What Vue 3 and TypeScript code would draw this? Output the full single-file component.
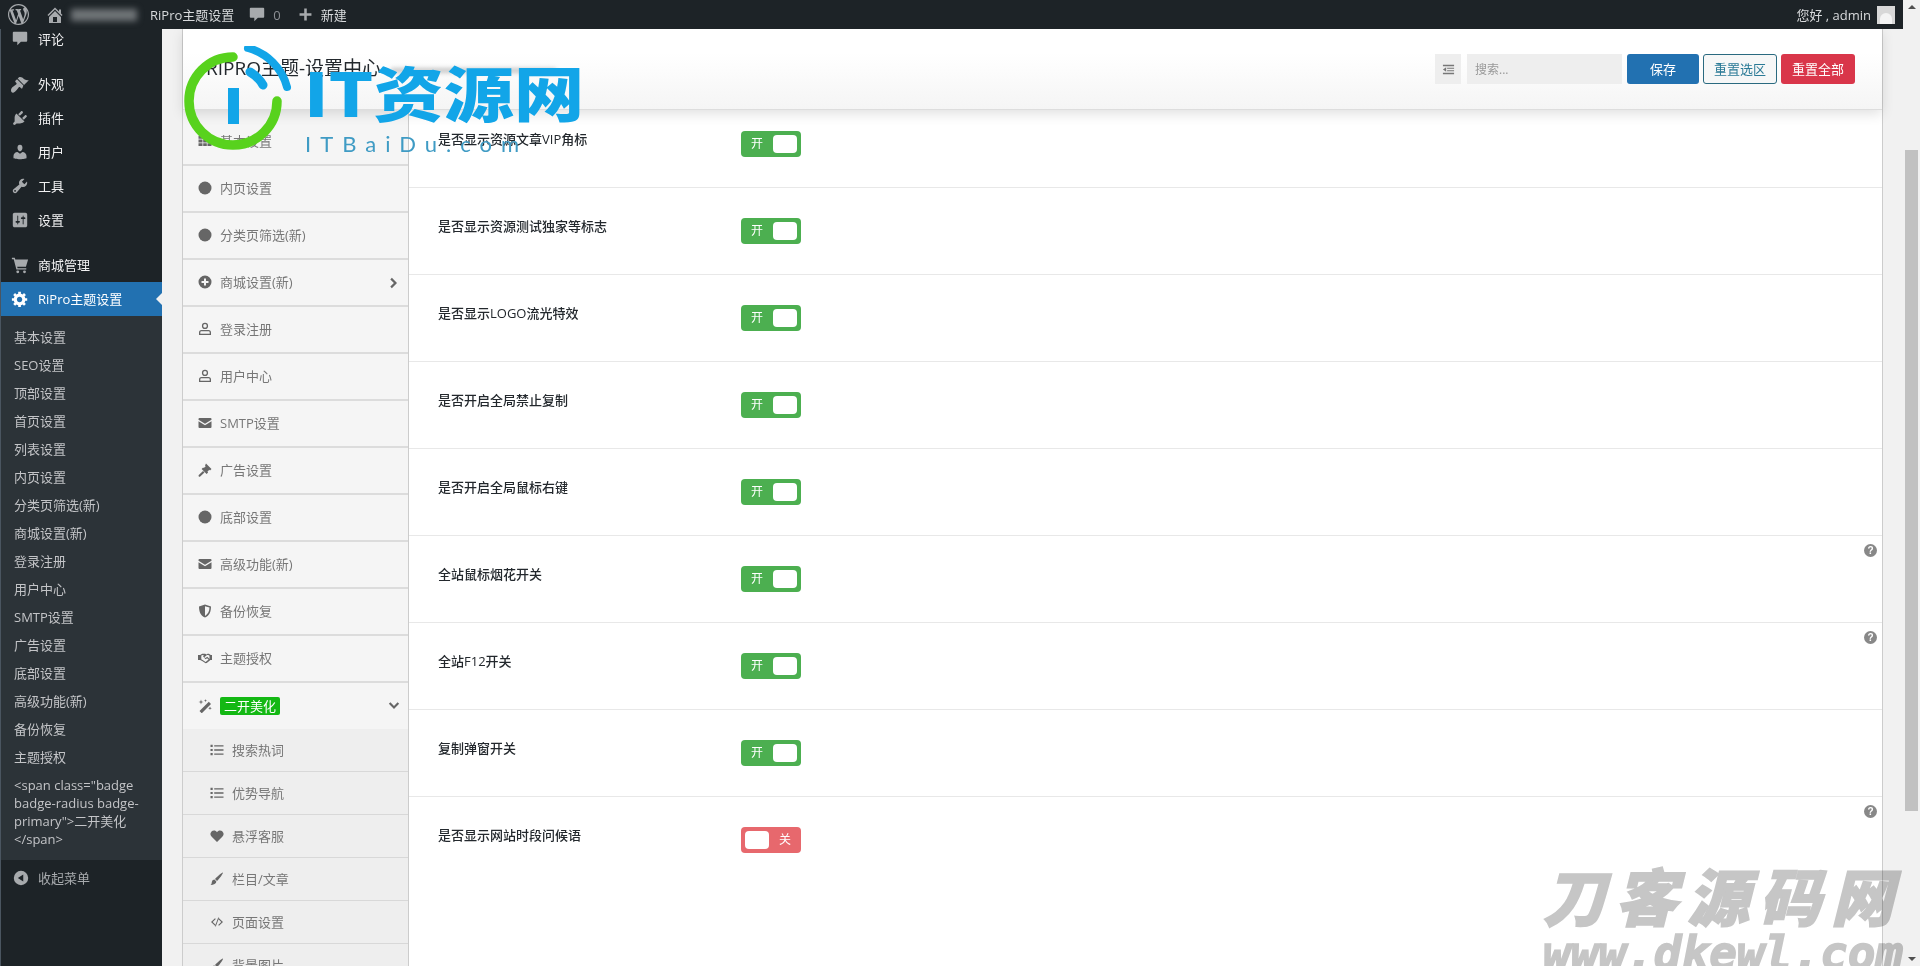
<script setup lang="ts">
const wp: Record<string, string> = {
  logo: 'M20 10c0-5.51-4.49-10-10-10C4.48 0 0 4.49 0 10c0 5.52 4.48 10 10 10 5.51 0 10-4.48 10-10zM7.78 15.37L4.37 6.22c.55-.02 1.17-.08 1.17-.08.5-.06.44-1.13-.06-1.11 0 0-1.45.11-2.37.11-.18 0-.37 0-.58-.01C4.12 2.69 6.87 1.11 10 1.11c2.33 0 4.45.87 6.05 2.34-.68-.11-1.65.39-1.65 1.58 0 .74.45 1.36.9 2.1.35.61.55 1.36.55 2.46 0 1.49-1.4 5-1.4 5l-3.03-8.37c.54-.02.82-.17.82-.17.5-.05.44-1.25-.06-1.22 0 0-1.44.12-2.38.12-.87 0-2.33-.12-2.33-.12-.5-.03-.56 1.2-.06 1.22l.92.08 1.26 3.41zM17.41 10c.24-.64.74-1.87.43-4.25.7 1.29 1.05 2.71 1.05 4.25 0 3.29-1.73 6.24-4.4 7.78.97-2.59 1.94-5.2 2.92-7.78zM6.1 18.09C3.12 16.65 1.11 13.53 1.11 10c0-1.3.23-2.48.72-3.59C3.25 10.3 4.67 14.2 6.1 18.09zm4.03-6.63l2.58 6.98c-.86.29-1.76.45-2.71.45-.79 0-1.57-.11-2.29-.33.81-2.38 1.62-4.74 2.42-7.1z',
  home: 'M16 8.5l1.53 1.53-1.06 1.06L10 4.62l-6.47 6.47-1.06-1.06L10 2.5l4 4v-2h2v4zm-6-2.46l6 5.99V18H4v-5.97zM12 17v-5H8v5h4z',
  comment: 'M3 2h14a1 1 0 0 1 1 1v9a1 1 0 0 1-1 1h-6l-4 4v-4H3a1 1 0 0 1-1-1V3a1 1 0 0 1 1-1z',
  plus: 'M17 8.5v3h-5.5V17h-3v-5.5H3v-3h5.5V3h3v5.5z',
  brush: 'M14.48 11.06L7.41 3.99l1.5-1.5c.5-.56 2.3-.47 3.51.32 1.21.8 1.43 1.28 2.91 2.1 1.18.64 2.45 1.26 4.45.85zm-.71.71L6.7 4.7 4.93 6.47c-.39.39-.39 1.02 0 1.41l1.06 1.06c.39.39.39 1.03 0 1.42-.6.6-1.43 1.11-2.21 1.69-.35.26-.7.53-1.01.84C1.43 13.23 0 15.27 0 17s1 3 2.5 2.7c.63-.13 1.27-.5 1.9-1.03.95-.8 1.86-1.9 2.6-2.9.58-.78 1.09-1.61 1.69-2.21.39-.39 1.03-.39 1.42 0l1.06 1.06c.39.39 1.02.39 1.41 0z',
  plug: 'M13.11 4.36L9.87 7.6 8 5.73l3.24-3.24c.35-.34 1.05-.2 1.56.32.52.51.66 1.21.31 1.55zm-8 1.77l.91-1.12 9.01 9.01-1.19.84c-.71.71-2.63 1.16-3.82 1.16H6.14L4.9 17.26c-.59.59-1.54.59-2.12 0-.59-.58-.59-1.53 0-2.12l1.24-1.24v-3.88c0-1.13.4-3.19 1.09-3.89zm7.26 3.97l3.24-3.24c.34-.35 1.04-.21 1.55.31.52.51.66 1.21.31 1.55l-3.24 3.25z',
  user: 'M10 9.25c-2.27 0-2.73-3.44-2.73-3.44C7 4.02 7.82 2 9.97 2c2.16 0 2.98 2.02 2.71 3.81 0 0-.41 3.44-2.68 3.44zm0 2.57L12.72 10c2.39 0 4.52 2.33 4.52 4.53v2.49s-3.65 1.13-7.24 1.13c-3.65 0-7.24-1.13-7.24-1.13v-2.49c0-2.25 1.94-4.48 4.47-4.48z',
  tool: 'M16.68 9.77c-1.34 1.34-3.3 1.67-4.95.99l-5.41 6.52c-.99.99-2.59.99-3.58 0s-.99-2.59 0-3.57l6.52-5.42c-.68-1.65-.35-3.61.99-4.95 1.28-1.28 3.12-1.62 4.72-1.06l-2.89 2.89 2.82 2.82 2.86-2.87c.53 1.58.18 3.39-1.08 4.65zM3.81 16.21c.4.39 1.04.39 1.43 0 .4-.4.4-1.04 0-1.43-.39-.4-1.03-.4-1.43 0-.39.39-.39 1.03 0 1.43z',
  settings: 'M18 16V4c0-1.1-.9-2-2-2H4c-1.1 0-2 .9-2 2v12c0 1.1.9 2 2 2h12c1.1 0 2-.9 2-2zM8 11h1c.55 0 1 .45 1 1s-.45 1-1 1H8v1.5c0 .28-.22.5-.5.5s-.5-.22-.5-.5V13H6c-.55 0-1-.45-1-1s.45-1 1-1h1V5.5c0-.28.22-.5.5-.5s.5.22.5.5V11zm5-2h-1c-.55 0-1-.45-1-1s.45-1 1-1h1V5.5c0-.28.22-.5.5-.5s.5.22.5.5V7h1c.55 0 1 .45 1 1s-.45 1-1 1h-1v5.5c0 .28-.22.5-.5.5s-.5-.22-.5-.5V9z',
  cart: 'M1 2h3.2l.6 2H19l-2.4 8H6.9l.4 1.5H17V15H6L3 3.5H1zM7.5 16a1.6 1.6 0 1 1 0 3.2 1.6 1.6 0 0 1 0-3.2zM15 16a1.6 1.6 0 1 1 0 3.2 1.6 1.6 0 0 1 0-3.2z',
  gear: 'M18 12h-2.18c-.17.7-.44 1.35-.81 1.93l1.54 1.54-2.1 2.1-1.54-1.54c-.58.36-1.23.63-1.91.79V19H8v-2.18c-.68-.16-1.33-.43-1.91-.79l-1.54 1.54-2.12-2.12 1.54-1.54c-.36-.58-.63-1.23-.79-1.91H1V9.03h2.17c.16-.7.44-1.35.8-1.94L2.43 5.55l2.1-2.1 1.54 1.54c.58-.37 1.24-.64 1.93-.81V2h3v2.18c.68.16 1.33.43 1.91.79l1.54-1.54 2.12 2.12-1.54 1.54c.36.59.64 1.24.8 1.94H18V12zm-8.5 1.5c1.66 0 3-1.34 3-3s-1.34-3-3-3-3 1.34-3 3 1.34 3 3 3z',
  collapse: 'M10 2a8 8 0 1 0 0 16 8 8 0 0 0 0-16zM12.5 6v8L6.5 10z',
}

const fa: Record<string, string> = {
  th: 'M.5 2h4v2.8h-4zM5.2 2h3.6v2.8H5.2zM9.5 2h4v2.8h-4zM.5 5.600h4v2.800h-4zM5.2 5.600h3.600v2.800H5.2zM9.5 5.600h4v2.800h-4zM.5 9.200h4V12h-4zM5.2 9.200h3.600V12H5.2zM9.5 9.200h4V12h-4z',
  circle: 'M7 .5a6.5 6.5 0 1 0 0 13 6.5 6.5 0 0 0 0-13z',
  plus: 'M7 .5a6.5 6.5 0 1 0 0 13 6.5 6.5 0 0 0 0-13zM6 3.5h2V6h2.5v2H8v2.5H6V8H3.5V6H6z',
  user: 'M7 .8a3.100 3.100 0 1 0 0 6.200 3.100 3.100 0 0 0 0-6.200zm0 1.300a1.800 1.800 0 1 1 0 3.600 1.800 1.800 0 0 1 0-3.600zM3.500 8h7A2.500 2.500 0 0 1 13 10.500V13H1v-2.500A2.500 2.500 0 0 1 3.500 8zm0 1.300c-.7 0-1.200.5-1.200 1.200v1.200h9.400v-1.200c0-.7-.5-1.200-1.200-1.200z',
  mail: 'M.5 3a1 1 0 0 1 1-1h11a1 1 0 0 1 1 1v.8L7 7.800.5 3.800zM.5 5.300L7 9.300l6.500-4V11a1 1 0 0 1-1 1h-11a1 1 0 0 1-1-1z',
  gavel: 'M8 .5l5.500 5.500-1.500 1.500-.7-.7-1.900 1.900.7.700-1.500 1.500-5-5 1.500-1.500.7.7 1.900-1.900-.7-.7zM5 8l1.500 1.500-4.300 4c-.4.3-1 .3-1.400-.1s-.4-1 0-1.400z',
  shield: 'M7 .5l6 2c0 5-1.400 9-6 11-4.600-2-6-6-6-11zM7 2.200v9.700c3-1.600 4.400-4.500 4.500-8.300z',
  shake: 'M0 4h2.200l2-1.200h3l1.200.6 1.200-.6h1.200l2 1.200H14v5h-1.600l-3.600 3-1.200.3-3-2L2.200 9H0zM3.300 4.600v3.600l1.700 1 2.600 1.700 3.900-3.200V4.800l-1.200-.8H9L6.300 6.300l1 .8 2-1.300 2 2-.8.8-1.400-1.400-1.600 1L4.900 5l1.200-1H4.900z',
  magic: 'M10.800 2.800l2.200 2.200-9.300 9.300L1.500 12.100zM3 .5l.6 1.900 1.900.6-1.900.6L3 5.500l-.6-1.900L.5 3l1.900-.6zM12 7.500l.5 1.300 1.300.5-1.300.5-.5 1.300-.5-1.300-1.300-.5 1.300-.5zM7.500 0l.4 1.200 1.200.4-1.200.4-.4 1.200-.4-1.200-1.200-.4 1.200-.4z',
  list: 'M.5 1.800h2.200V4H.5zM4.200 2.200h9.300v1.400H4.200zM.5 5.900h2.200v2.200H.5zM4.200 6.300h9.300v1.400H4.200zM.5 10h2.200v2.200H.5zM4.200 10.400h9.300v1.400H4.200z',
  heart: 'M7 13L1.500 7.500A3.500 3.500 0 0 1 4 1.500c1.300 0 2.300.6 3 1.700.7-1.100 1.700-1.700 3-1.700a3.500 3.500 0 0 1 2.500 6z',
  paint: 'M13 .5c.5.5-4 7-6 8.500L5 7C6.500 5 12.500 0 13 .5zM4.500 7.600l1.900 2c-.2 2.400-2.600 3.400-5.900 3.400 1.400-1 1-2.100 1.500-3.500.4-1.200 1.400-1.900 2.500-1.900z',
  code: 'M5 3.200L1 7l4 3.800.8-.8L2.700 7l3.100-3zM9 3.200L13 7l-4 3.800-.8-.8 3.100-3-3.100-3zM8.200 2.500l.9.3-3.300 8.700-.9-.3z',
  right: 'M4.500 1l6 6-6 6-1.800-1.800L6.900 7 2.700 2.800z',
  down: 'M1 4.500l6 6 6-6-1.800-1.800L7 6.900 2.800 2.700z',
  outdent: 'M1 2h12v1.500H1zM5.500 5h7.500v1.300H5.500zM5.500 7.700h7.500V9H5.500zM1 10.500h12V12H1zM4.500 4.700v4.600L1 7z',
}

const topMenu = [
  { icon: 'comment', text: '评论' },
  { icon: 'brush', text: '外观', gap: true },
  { icon: 'plug', text: '插件' },
  { icon: 'user', text: '用户' },
  { icon: 'tool', text: '工具' },
  { icon: 'settings', text: '设置' },
  { icon: 'cart', text: '商城管理', gap: true },
]

const subMenu = ['基本设置', 'SEO设置', '顶部设置', '首页设置', '列表设置', '内页设置', '分类页筛选(新)', '商城设置(新)', '登录注册', '用户中心', 'SMTP设置', '广告设置', '底部设置', '高级功能(新)', '备份恢复', '主题授权']

const navItems = [
  { icon: 'th', text: '基本设置' },
  { icon: 'circle', text: '内页设置' },
  { icon: 'circle', text: '分类页筛选(新)' },
  { icon: 'plus', text: '商城设置(新)', arrow: true },
  { icon: 'user', text: '登录注册' },
  { icon: 'user', text: '用户中心' },
  { icon: 'mail', text: 'SMTP设置' },
  { icon: 'gavel', text: '广告设置' },
  { icon: 'circle', text: '底部设置' },
  { icon: 'mail', text: '高级功能(新)' },
  { icon: 'shield', text: '备份恢复' },
  { icon: 'shake', text: '主题授权' },
]

const navSub = [
  { icon: 'list', text: '搜索热词' },
  { icon: 'list', text: '优势导航' },
  { icon: 'heart', text: '悬浮客服' },
  { icon: 'paint', text: '栏目/文章' },
  { icon: 'code', text: '页面设置' },
  { icon: 'paint', text: '背景图片' },
]

const rows = [
  { label: '是否显示资源文章VIP角标', on: true },
  { label: '是否显示资源测试独家等标志', on: true },
  { label: '是否显示LOGO流光特效', on: true },
  { label: '是否开启全局禁止复制', on: true },
  { label: '是否开启全局鼠标右键', on: true },
  { label: '全站鼠标烟花开关', on: true, help: true },
  { label: '全站F12开关', on: true, help: true },
  { label: '复制弹窗开关', on: true },
  { label: '是否显示网站时段问候语', on: false, help: true },
]
</script>

<template>
  <div class="root">
    <div class="page">
      <header class="adminbar">
        <svg class="ab-logo" viewBox="0 0 20 20"><path :d="wp.logo" fill-rule="evenodd" /></svg>
        <svg class="ab-home" viewBox="0 0 20 20"><path :d="wp.home" fill-rule="evenodd" /></svg>
        <span class="ab-blur"></span>
        <span class="ab-title">RiPro主题设置</span>
        <svg class="ab-comment" viewBox="0 0 20 20"><path :d="wp.comment" /></svg>
        <span class="ab-count">0</span>
        <svg class="ab-plus" viewBox="0 0 20 20"><path :d="wp.plus" /></svg>
        <span class="ab-new">新建</span>
        <span class="ab-hello">您好 , admin</span>
        <span class="ab-avatar"><i></i></span>
      </header>

      <div class="below">
        <aside class="adminmenu">
          <div v-for="m in topMenu" :key="m.text" class="mi" :class="{ gap: m.gap }">
            <svg viewBox="0 0 20 20"><path :d="wp[m.icon]" fill-rule="evenodd" /></svg>
            <span>{{ m.text }}</span>
          </div>
          <div class="mi current">
            <svg viewBox="0 0 20 20"><path :d="wp.gear" fill-rule="evenodd" /></svg>
            <span>RiPro主题设置</span>
          </div>
          <div class="submenu">
            <div v-for="s in subMenu" :key="s" class="si">{{ s }}</div>
            <div class="si multi">&lt;span class="badge badge-radius badge-primary"&gt;二开美化&lt;/span&gt;</div>
          </div>
          <div class="collapse">
            <svg viewBox="0 0 20 20"><path :d="wp.collapse" fill-rule="evenodd" /></svg>
            <span>收起菜单</span>
          </div>
        </aside>

        <main class="panel">
          <div class="head">
            <h1 class="title">RIPRO主题-设置中心</h1>
            <span class="title-sub"></span>
            <div class="tools">
              <button class="tbtn"><svg viewBox="0 0 14 14"><path :d="fa.outdent" fill-rule="evenodd" /></svg></button>
              <span class="search">搜索...</span>
              <button class="btn save">保存</button>
              <button class="btn reset">重置选区</button>
              <button class="btn resetall">重置全部</button>
            </div>
          </div>

          <div class="body">
            <nav class="nav">
              <div v-for="n in navItems" :key="n.text" class="ni">
                <svg class="ic" viewBox="0 0 14 14"><path :d="fa[n.icon]" fill-rule="evenodd" /></svg>
                <span class="nt">{{ n.text }}</span>
                <svg v-if="n.arrow" class="arrow" viewBox="0 0 14 14"><path :d="fa.right" /></svg>
              </div>
              <div class="ni open">
                <svg class="ic" viewBox="0 0 14 14"><path :d="fa.magic" /></svg>
                <span class="badge">二开美化</span>
                <svg class="arrow" viewBox="0 0 14 14"><path :d="fa.down" /></svg>
              </div>
              <div v-for="n in navSub" :key="n.text" class="nsub">
                <svg class="ic" viewBox="0 0 14 14"><path :d="fa[n.icon]" fill-rule="evenodd" /></svg>
                <span>{{ n.text }}</span>
              </div>
            </nav>

            <section class="fields">
              <div v-for="r in rows" :key="r.label" class="row">
                <div class="label">{{ r.label }}</div>
                <div class="switch" :class="r.on ? 'on' : 'off'">
                  <template v-if="r.on"><em>开</em><b></b></template>
                  <template v-else><b></b><em>关</em></template>
                </div>
                <span v-if="r.help" class="help">?</span>
              </div>
            </section>
          </div>
        </main>
        <div class="rightgap"></div>
      </div>
    </div>

    <div class="scrollbar">
      <i class="up"></i>
      <div class="thumb"></div>
      <i class="dn"></i>
    </div>

    <div class="logo-mark">
      <svg class="lm-svg" viewBox="0 0 130 120">
        <path d="M50 11A44 44 0 1 0 94 55" fill="none" stroke="#58d21d" stroke-width="9.5" stroke-linecap="round" />
        <path d="M65 2A55 55 0 0 1 104 41" fill="none" stroke="#12a5e8" stroke-width="8" stroke-linecap="round" />
        <path d="M67 26A34.500 34.500 0 0 1 80 39" fill="none" stroke="#12a5e8" stroke-width="9" stroke-linecap="round" />
        <rect x="45" y="42" width="11" height="36" fill="#12a5e8" />
      </svg>
      <span class="lm-cn">IT资源网</span>
      <span class="lm-en">ITBaiDu.com</span>
    </div>

    <div class="dk-mark">
      <span class="dk-cn">刀客源码网</span>
      <span class="dk-en">www.dkewl.com</span>
    </div>
  </div>
</template>

<style>
html, body { margin: 0; height: 966px; overflow: hidden; background: #f1f1f1; }
</style>

<style scoped>
* { box-sizing: border-box; }
.root {
  position: relative;
  display: flex;
  width: 1920px;
  height: 966px;
  overflow: hidden;
  font: 13px/18px "Open Sans", "Noto Sans CJK SC", sans-serif;
  color: #444;
  background: #f1f1f1;
}
.page { flex: 0 0 1903px; display: flex; flex-direction: column; min-width: 0; }

/* admin bar */
.adminbar {
  position: relative;
  z-index: 5;
  flex: 0 0 29px;
  display: flex;
  align-items: center;
  background: #1d2327;
  color: #d8dadc;
  fill: #a7aaad;
}
.ab-logo { width: 21px; height: 21px; margin-left: 8px; }
.ab-home { width: 20px; height: 20px; margin-left: 16px; }
.ab-blur { width: 66px; height: 12px; margin-left: 6px; background: #6f7477; filter: blur(3px); }
.ab-title { margin-left: 13px; }
.ab-comment { width: 18px; height: 18px; margin-left: 14px; }
.ab-count { margin-left: 7px; color: #8c8f94; }
.ab-plus { width: 17px; height: 17px; margin-left: 16px; }
.ab-new { margin-left: 7px; }
.ab-hello { margin-left: auto; }
.ab-avatar { width: 18px; height: 18px; margin: 0 8px 0 6px; background: #d8d8d8; display: flex; align-items: flex-end; justify-content: center; overflow: hidden; }
.ab-avatar i { display: block; width: 12px; height: 11px; background: #f4f4f4; border-radius: 6px 6px 0 0; }

.below { flex: 1; display: flex; min-height: 0; }

/* admin menu */
.adminmenu {
  flex: 0 0 162px;
  margin-top: -7px;
  background: #1d2327;
  border-left: 1px solid #4a5560;
  color: #f0f0f1;
}
.mi { height: 34px; display: flex; align-items: center; padding: 0 0 1px 10px; position: relative; }
.mi svg { width: 18px; height: 18px; fill: #a7aaad; flex: none; margin-right: 9px; }
.mi.gap { margin-top: 11px; }
.mi.current { background: #2271b1; color: #fff; }
.mi.current svg { fill: #fff; }
.mi.current::after {
  content: "";
  position: absolute;
  right: 0;
  top: 11px;
  border: 6px solid transparent;
  border-right-color: #f1f1f1;
  border-left-width: 0;
}
.submenu { background: #2c3338; padding: 7px 0; color: #c3c4c7; }
.si { padding: 5px 12px 5px 13px; }
.si.multi { padding-right: 20px; }
.collapse { height: 36px; display: flex; align-items: center; padding-left: 11px; color: #a7aaad; }
.collapse svg { width: 18px; height: 18px; fill: #a7aaad; margin-right: 8px; }

/* options panel */
.panel {
  flex: 0 0 1701px;
  margin-left: 20px;
  display: flex;
  flex-direction: column;
  border-left: 1px solid #ccc;
  border-right: 1px solid #ccc;
  min-height: 0;
}
.head {
  position: relative;
  z-index: 2;
  flex: 0 0 81px;
  display: flex;
  align-items: flex-start;
  background: linear-gradient(#fff 30%, #f5f5f5);
  border-bottom: 1px solid #ddd;
  box-shadow: 0 4px 12px rgba(0, 0, 0, .12);
  padding: 26px 27px 0 23px;
}
.title { margin: 0; font-size: 19px; line-height: 26px; font-weight: 400; color: #23282d; }
.title-sub { width: 165px; height: 5px; margin: 13px 0 0 10px; background: #bbb; filter: blur(2px); opacity: .8; }
.tools { margin-left: auto; display: flex; align-items: stretch; height: 30px; margin-top: -1px; }
.tbtn { width: 26px; padding: 0; border: 0; background: #eee; display: flex; align-items: center; justify-content: center; margin-right: 6px; }
.tbtn svg { width: 13px; height: 13px; fill: #777; }
.search { width: 155px; background: #eee; color: #999; font-size: 12px; line-height: 32px; padding-left: 8px; margin-right: 5px; }
.btn { font: inherit; border-radius: 3px; border: 1px solid transparent; padding: 0; cursor: pointer; }
.save { width: 72px; background: #2271b1; color: #fff; margin-right: 4px; }
.reset { width: 74px; background: #f6f7f7; border-color: #2a6a80; color: #2a7a96; margin-right: 4px; }
.resetall { width: 74px; background: #d9364a; color: #fff; }

.body { flex: 1; display: flex; min-height: 0; }
.nav {
  flex: 0 0 226px;
  padding-top: 9px;
  background: #f5f5f5;
  border-right: 1px solid #ccc;
  color: #777;
  overflow: hidden;
}
.ni { height: 47px; display: flex; align-items: center; padding: 0 0 1px 15px; border-bottom: 2px solid #dcdcdc; position: relative; }
.ni.open { height: 46px; border-bottom: 0; }
.ic { width: 14px; height: 14px; fill: #666; flex: none; margin-right: 8px; }
.arrow { position: absolute; right: 8px; top: 50%; margin-top: -6px; width: 12px; height: 12px; fill: #666; }
.badge { background: #14b814; color: #fff; padding: 0 4px; border-radius: 2px; height: 18px; line-height: 18px; }
.nsub { height: 43px; flex: none; display: flex; align-items: center; padding: 0 0 1px 27px; background: #eee; border-bottom: 1px solid #d8d8d8; }

.fields { flex: 1; background: #fff; min-width: 0; }
.row {
  position: relative;
  display: flex;
  align-items: flex-start;
  height: 87px;
  padding: 30px 0 0 29px;
  border-bottom: 1px solid #e8e8e8;
}
.row:first-child { height: 78px; padding-top: 21px; }
.row:last-child { border-bottom: 0; }
.label { flex: 0 0 303px; margin-top: -1px; color: #23282d; font-weight: 500; }
.switch { width: 60px; height: 26px; border-radius: 4px; display: flex; align-items: center; justify-content: space-between; padding: 0 4px 0 10px; color: #fff; }
.switch.off { padding: 0 10px 0 4px; background: #e7686d; }
.switch.on { background: #4caf50; }
.switch em { font-style: normal; font-size: 12px; }
.switch b { display: block; width: 24px; height: 18px; background: #fff; border-radius: 4px; }
.help {
  position: absolute;
  right: 5px;
  top: 8px;
  width: 13px;
  height: 13px;
  border-radius: 50%;
  background: #888;
  color: #fff;
  font: 700 10px/13px "Liberation Sans", sans-serif;
  text-align: center;
}
.rightgap { flex: 1; }

/* scrollbar */
.scrollbar { flex: 0 0 17px; display: flex; flex-direction: column; align-items: center; background: #f1f1f1; position: relative; }
.scrollbar .up { margin-top: 5px; border: 4px solid transparent; border-top: 0; border-bottom: 4px solid #505050; }
.thumb { width: 13px; height: 661px; margin-top: 141px; background: #c1c1c1; }
.scrollbar .dn { margin-top: auto; margin-bottom: 5px; border: 4px solid transparent; border-bottom: 0; border-top: 4px solid #505050; }

/* overlaid watermarks */
.logo-mark { position: absolute; left: 183px; top: 46px; width: 420px; height: 130px; pointer-events: none; z-index: 6; }
.lm-svg { position: absolute; left: 0; top: 0; width: 130px; height: 120px; }
.lm-cn {
  position: absolute;
  left: 121px;
  top: 12px;
  font: 900 60px/66px "Noto Sans CJK SC", sans-serif;
  color: #12a5e8;
  white-space: nowrap;
  transform: scaleX(1.17);
  transform-origin: 0 50%;
}
.lm-en {
  position: absolute;
  left: 122px;
  top: 84px;
  font: 400 22px/28px Lato, sans-serif;
  letter-spacing: 9px;
  color: #3f9bc4;
  white-space: nowrap;
}
.dk-mark { position: absolute; left: 1543px; top: 858px; width: 370px; pointer-events: none; z-index: 6; color: #c6c6c6; mix-blend-mode: multiply; }
.dk-cn {
  display: block;
  font: italic 900 62px/72px "Noto Sans CJK SC", sans-serif;
  letter-spacing: 10px;
  white-space: nowrap;
  -webkit-text-stroke: 1.500px #c6c6c6;
}
.dk-en {
  display: block;
  font: italic 700 46px/46px "DejaVu Sans Mono", monospace;
  white-space: nowrap;
  -webkit-text-stroke: 1.500px #c6c6c6;
}
</style>
